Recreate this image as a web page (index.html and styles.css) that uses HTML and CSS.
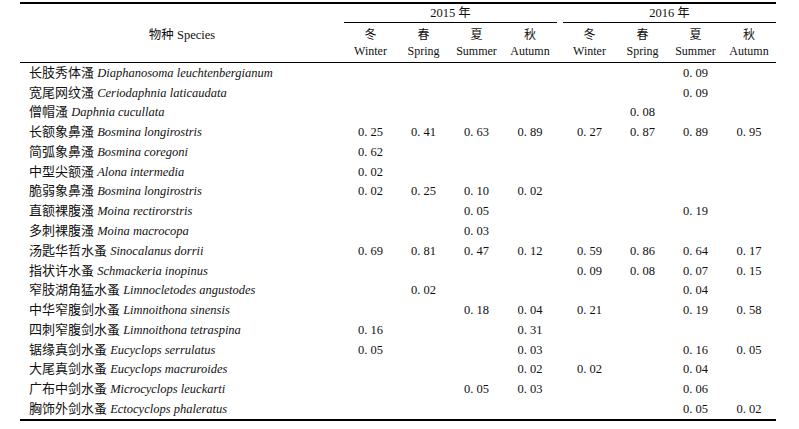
FILE: index.html
```html
<!DOCTYPE html>
<html lang="zh">
<head>
<meta charset="utf-8">
<title>物种 Species</title>
<link rel="stylesheet" href="styles.css">
</head>
<body>
<table class="data">
  <colgroup>
    <col class="c-species">
    <col class="c-val"><col class="c-val"><col class="c-val"><col class="c-val4">
    <col class="c-gap">
    <col class="c-val"><col class="c-val"><col class="c-val"><col class="c-val4">
  </colgroup>
  <thead>
    <tr class="h1">
      <th class="species-h" rowspan="2">物种 Species</th>
      <th class="year" colspan="4">2015 年</th>
      <th class="gap" rowspan="2"></th>
      <th class="year" colspan="4">2016 年</th>
    </tr>
    <tr class="h2">
      <th class="season">冬<br>Winter</th>
      <th class="season">春<br>Spring</th>
      <th class="season">夏<br>Summer</th>
      <th class="season">秋<br>Autumn</th>
      <th class="season">冬<br>Winter</th>
      <th class="season">春<br>Spring</th>
      <th class="season">夏<br>Summer</th>
      <th class="season">秋<br>Autumn</th>
    </tr>
  </thead>
  <tbody>
    <tr><td class="sp"><span class="cn">长肢秀体溞</span> <i>Diaphanosoma leuchtenbergianum</i></td><td></td><td></td><td></td><td></td><td></td><td></td><td></td><td>0. 09</td><td></td></tr>
    <tr><td class="sp"><span class="cn">宽尾网纹溞</span> <i>Ceriodaphnia laticaudata</i></td><td></td><td></td><td></td><td></td><td></td><td></td><td></td><td>0. 09</td><td></td></tr>
    <tr><td class="sp"><span class="cn">僧帽溞</span> <i>Daphnia cucullata</i></td><td></td><td></td><td></td><td></td><td></td><td></td><td>0. 08</td><td></td><td></td></tr>
    <tr><td class="sp"><span class="cn">长额象鼻溞</span> <i>Bosmina longirostris</i></td><td>0. 25</td><td>0. 41</td><td>0. 63</td><td>0. 89</td><td></td><td>0. 27</td><td>0. 87</td><td>0. 89</td><td>0. 95</td></tr>
    <tr><td class="sp"><span class="cn">简弧象鼻溞</span> <i>Bosmina coregoni</i></td><td>0. 62</td><td></td><td></td><td></td><td></td><td></td><td></td><td></td><td></td></tr>
    <tr><td class="sp"><span class="cn">中型尖额溞</span> <i>Alona intermedia</i></td><td>0. 02</td><td></td><td></td><td></td><td></td><td></td><td></td><td></td><td></td></tr>
    <tr><td class="sp"><span class="cn">脆弱象鼻溞</span> <i>Bosmina longirostris</i></td><td>0. 02</td><td>0. 25</td><td>0. 10</td><td>0. 02</td><td></td><td></td><td></td><td></td><td></td></tr>
    <tr><td class="sp"><span class="cn">直额裸腹溞</span> <i>Moina rectirorstris</i></td><td></td><td></td><td>0. 05</td><td></td><td></td><td></td><td></td><td>0. 19</td><td></td></tr>
    <tr><td class="sp"><span class="cn">多刺裸腹溞</span> <i>Moina macrocopa</i></td><td></td><td></td><td>0. 03</td><td></td><td></td><td></td><td></td><td></td><td></td></tr>
    <tr><td class="sp"><span class="cn">汤匙华哲水蚤</span> <i>Sinocalanus dorrii</i></td><td>0. 69</td><td>0. 81</td><td>0. 47</td><td>0. 12</td><td></td><td>0. 59</td><td>0. 86</td><td>0. 64</td><td>0. 17</td></tr>
    <tr><td class="sp"><span class="cn">指状许水蚤</span> <i>Schmackeria inopinus</i></td><td></td><td></td><td></td><td></td><td></td><td>0. 09</td><td>0. 08</td><td>0. 07</td><td>0. 15</td></tr>
    <tr><td class="sp"><span class="cn">窄肢湖角猛水蚤</span> <i>Limnocletodes angustodes</i></td><td></td><td>0. 02</td><td></td><td></td><td></td><td></td><td></td><td>0. 04</td><td></td></tr>
    <tr><td class="sp"><span class="cn">中华窄腹剑水蚤</span> <i>Limnoithona sinensis</i></td><td></td><td></td><td>0. 18</td><td>0. 04</td><td></td><td>0. 21</td><td></td><td>0. 19</td><td>0. 58</td></tr>
    <tr><td class="sp"><span class="cn">四刺窄腹剑水蚤</span> <i>Limnoithona tetraspina</i></td><td>0. 16</td><td></td><td></td><td>0. 31</td><td></td><td></td><td></td><td></td><td></td></tr>
    <tr><td class="sp"><span class="cn">锯缘真剑水蚤</span> <i>Eucyclops serrulatus</i></td><td>0. 05</td><td></td><td></td><td>0. 03</td><td></td><td></td><td></td><td>0. 16</td><td>0. 05</td></tr>
    <tr><td class="sp"><span class="cn">大尾真剑水蚤</span> <i>Eucyclops macruroides</i></td><td></td><td></td><td></td><td>0. 02</td><td></td><td>0. 02</td><td></td><td>0. 04</td><td></td></tr>
    <tr><td class="sp"><span class="cn">广布中剑水蚤</span> <i>Microcyclops leuckarti</i></td><td></td><td></td><td>0. 05</td><td>0. 03</td><td></td><td></td><td></td><td>0. 06</td><td></td></tr>
    <tr><td class="sp"><span class="cn">胸饰外剑水蚤</span> <i>Ectocyclops phaleratus</i></td><td></td><td></td><td></td><td></td><td></td><td></td><td></td><td>0. 05</td><td>0. 02</td></tr>
  </tbody>
</table>
</body>
</html>
```

FILE: styles.css
```css
html, body {
  margin: 0;
  padding: 0;
  background: #ffffff;
}

body {
  font-family: "Liberation Serif", "Noto Sans CJK SC", serif;
  color: #111111;
  font-size: 12px;
}

.data {
  margin: 2px 0 0 20px;
  width: 756px;
  table-layout: fixed;
  border-collapse: separate;
  border-spacing: 0;
  border-top: 2px solid #000;
  border-bottom: 2px solid #000;
}

.c-species { width: 324px; }
.c-val { width: 53px; }
.c-val4 { width: 54px; }
.c-gap { width: 6px; }

th, td {
  padding: 0;
  font-weight: normal;
  vertical-align: middle;
}

.h1 { height: 19px; }
.h2 { height: 40px; }

.species-h {
  text-align: center;
  font-size: 12.5px;
  border-bottom: 1px solid #000;
}

.year {
  text-align: center;
  font-size: 12.5px;
  line-height: 18px;
  border-bottom: 1px solid #000;
}

.gap {
  border-bottom: 1px solid #000;
}

.season {
  text-align: center;
  line-height: 16px;
  font-size: 12px;
  border-bottom: 1px solid #000;
}

tbody tr {
  height: 19.78px;
}

tbody td {
  text-align: center;
  font-size: 12.5px;
  line-height: 16px;
  white-space: nowrap;
}

tbody td.sp {
  text-align: left;
  padding-left: 9px;
}

.sp .cn {
  font-size: 13px;
}

.sp i {
  font-style: italic;
}
```
